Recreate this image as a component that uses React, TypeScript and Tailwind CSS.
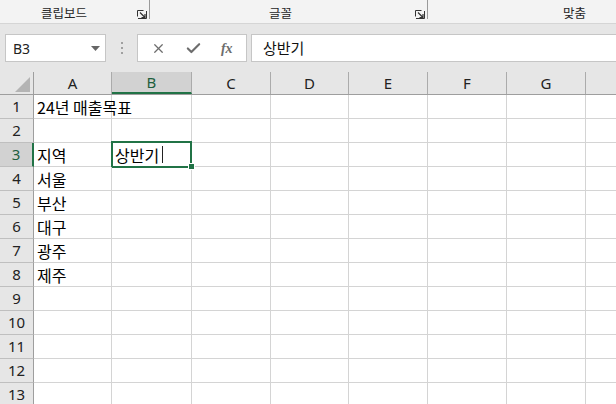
import { X, Check } from 'lucide-react';

const cols = [
  { name: 'A', w: 78 },
  { name: 'B', w: 80 },
  { name: 'C', w: 79 },
  { name: 'D', w: 78 },
  { name: 'E', w: 79 },
  { name: 'F', w: 79 },
  { name: 'G', w: 79 },
  { name: '', w: 40 },
];

const cells: Record<string, string> = {
  '1-A': '24년 매출목표',
  '3-A': '지역',
  '4-A': '서울',
  '5-A': '부산',
  '6-A': '대구',
  '7-A': '광주',
  '8-A': '제주',
};

const rows = [1, 2, 3, 4, 5, 6, 7, 8, 9, 10, 11, 12, 13];

function Launcher() {
  return (
    <svg width="10" height="9" viewBox="0 0 10 9" className="text-[#333]">
      <path d="M0.5 0.5h6M0.5 0.5v6" stroke="currentColor" strokeWidth="1" fill="none" />
      <path d="M3 2.5l5 5M8 4v3.5H4.5" stroke="currentColor" strokeWidth="1.2" fill="none" />
      <path d="M1 8.5h8.5V1" stroke="currentColor" strokeWidth="1" fill="none" />
    </svg>
  );
}

export default function App() {
  const ui = { fontFamily: '"Noto Sans CJK KR", "Noto Sans", sans-serif' };
  const head = { fontFamily: '"Noto Sans", "Noto Sans CJK KR", sans-serif' };

  return (
    <div className="w-[616px] h-[404px] overflow-hidden bg-white" style={ui}>
      {/* ribbon group labels */}
      <div className="h-[24px] bg-[#f3f3f3] border-b border-[#d5d5d5] flex text-[12.5px] text-[#262626]">
        <div className="w-[149px] shrink-0 relative">
          <span className="absolute left-[41px] top-[4px]">클립보드</span>
          <span className="absolute left-[137px] top-[10px]"><Launcher /></span>
        </div>
        <div className="w-px h-[19px] shrink-0 bg-[#9a9a9a]" />
        <div className="w-[277px] shrink-0 relative">
          <span className="absolute left-[119px] top-[4px]">글꼴</span>
          <span className="absolute left-[265px] top-[10px]"><Launcher /></span>
        </div>
        <div className="w-px h-[19px] shrink-0 bg-[#9a9a9a]" />
        <div className="flex-1 relative">
          <span className="absolute left-[135px] top-[4px]">맞춤</span>
        </div>
      </div>

      {/* formula bar */}
      <div className="h-[48px] bg-[#e6e6e6] flex items-start pt-[10px] pl-[5px]">
        <div className="w-[101px] shrink-0 h-[28px] bg-white border border-[#c6c6c6] flex items-center justify-between pl-[7px] pr-[5px]">
          <span className="text-[14px] text-[#222]" style={head}>B3</span>
          <svg width="9" height="5" viewBox="0 0 9 5"><path d="M0 0h9L4.5 5z" fill="#666" /></svg>
        </div>
        <div className="w-[31px] shrink-0 h-[28px] flex flex-col items-center justify-center gap-[3px]">
          <span className="w-[2px] h-[2px] bg-[#a0a0a0]" />
          <span className="w-[2px] h-[2px] bg-[#a0a0a0]" />
          <span className="w-[2px] h-[2px] bg-[#a0a0a0]" />
        </div>
        <div className="w-[110px] shrink-0 h-[28px] bg-white border border-[#c6c6c6] flex items-center justify-around px-[4px] text-[#6d6d6d]">
          <X size={15} strokeWidth={2} />
          <Check size={17} strokeWidth={3} />
          <span className="text-[14px] italic font-semibold" style={{ fontFamily: '"Liberation Serif", serif' }}>fx</span>
        </div>
        <div className="ml-[4px] flex-1 h-[28px] bg-white border-y border-l border-[#c6c6c6] flex items-center pl-[11px] text-[15px] text-[#111]">
          상반기
        </div>
      </div>

      {/* column headers */}
      <div className="h-[23px] bg-[#e6e6e6] flex border-b border-[#9e9e9e]" style={head}>
        <div className="w-[34px] shrink-0 border-r border-[#9e9e9e] flex items-end justify-end pr-[3px] pb-[2px]">
          <svg width="15" height="15" viewBox="0 0 15 15"><path d="M15 0V15H0z" fill="#b4b4b4" /></svg>
        </div>
        {cols.map((c) => (
          <div
            key={c.name + c.w}
            style={{ width: c.w }}
            className={`shrink-0 flex items-center justify-center text-[15px] border-r border-[#ababab] ${
              c.name === 'B' ? 'bg-[#d2d2d2] text-[#1e5f3e] border-b-2 border-b-[#217346]' : 'text-[#222]'
            }`}
          >
            {c.name}
          </div>
        ))}
      </div>

      {/* grid */}
      {rows.map((r) => (
        <div key={r} className="h-[24px] flex">
          <div
            className={`w-[34px] shrink-0 flex items-center justify-center text-[15px] border-b border-[#bfbfbf] ${
              r === 3 ? 'bg-[#d2d2d2] text-[#1e5f3e] border-r-2 border-r-[#217346]' : 'bg-[#e6e6e6] text-[#222] border-r border-r-[#9e9e9e]'
            }`}
            style={head}
          >
            {r}
          </div>
          {cols.map((c) => {
            const key = `${r}-${c.name}`;
            const sel = r === 3 && c.name === 'B';
            return (
              <div
                key={key + c.w}
                style={{ width: c.w }}
                className="shrink-0 relative border-r border-b border-[#d4d4d4] flex items-center pl-[3px] text-[16px] text-black whitespace-nowrap"
              >
                {cells[key] && <span className="relative z-10">{cells[key]}</span>}
                {sel && (
                  <>
                    <span className="relative z-10 flex items-center">
                      상반기<span className="ml-[3px] w-px h-[17px] bg-[#222]" />
                    </span>
                    <div className="absolute -left-[1px] -top-[2px] w-[81px] h-[27px] border-2 border-[#217346]" />
                    <div className="absolute z-20 -right-[4px] -bottom-[4px] w-[7px] h-[7px] bg-[#217346] border border-white" />
                  </>
                )}
              </div>
            );
          })}
        </div>
      ))}
    </div>
  );
}
